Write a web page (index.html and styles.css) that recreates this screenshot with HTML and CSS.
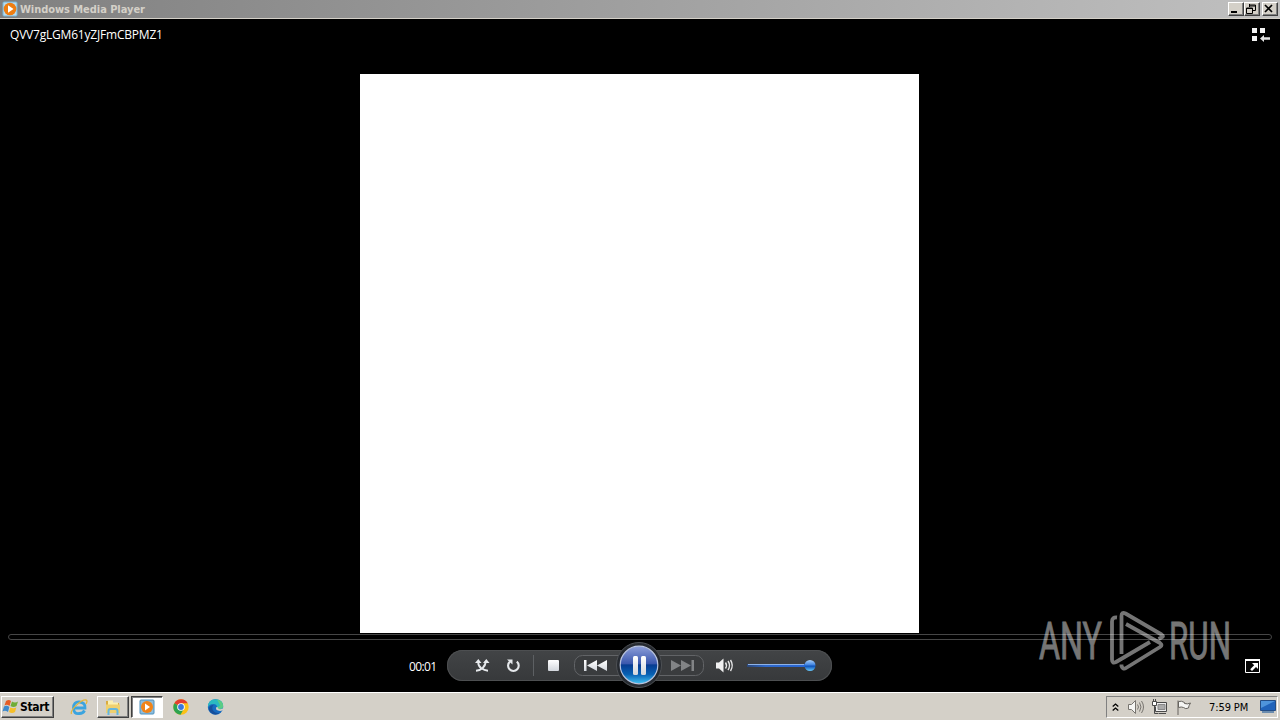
FILE: index.html
```
<!DOCTYPE html>
<html lang="en">
<head>
    <meta charset="UTF-8">
    <title>Windows Media Player</title>
    <link rel="stylesheet" href="styles.css">
</head>
<body>
    <!-- Title bar -->
    <header class="titlebar">
        <svg class="app-icon" width="16" height="16" viewBox="0 0 16 16">
            <rect x="1" y="1" width="14" height="14" rx="1" fill="#b9ddf0" stroke="#76b4d8"/>
            <circle cx="8" cy="8" r="6.3" fill="#ee7d12"/>
            <path d="M6 4.3l5.5 3.7L6 11.7z" fill="#fff"/>
        </svg>
        <span class="title">Windows Media Player</span>
        <div class="window-buttons">
            <button><svg width="12" height="10"><path d="M2 8h6" stroke="#000" stroke-width="2"/></svg></button>
            <button><svg width="12" height="10"><path d="M4.5 0v3M4 1h6.500v5.500H8M4.500 2h6M1.500 4v5.500h6V4zM1 4.500h7" fill="none" stroke="#000"/></svg></button>
            <button class="close"><svg width="12" height="10"><path d="M2 1l7 7M9 1L2 8" stroke="#000" stroke-width="1.700"/></svg></button>
        </div>
    </header>

    <main class="player">
        <div class="player-top">
            <span class="media-name">QVV7gLGM61yZJFmCBPMZ1</span>
            <svg class="library-icon" width="20" height="16" viewBox="0 0 20 16">
                <path d="M1 1h5v5H1zM9 1h5v5H9zM1 9h5v5H1z" fill="#f4f4f4"/>
                <path d="M9 11.500l4-3.500v2.300h6v2.500h-6V15z" fill="#e4e4e4"/>
            </svg>
        </div>

        <div class="video"></div>
        <div class="seek"></div>

        <div class="controls">
            <span class="time">00:01</span>
            <div class="pill">
                <svg width="385" height="48" viewBox="447 641 385 48">
                    <defs>
                        <linearGradient id="ball" x1="0" y1="0" x2="0" y2="1">
                            <stop offset="0" stop-color="#8e9fd9"/>
                            <stop offset=".46" stop-color="#3b58ae"/>
                            <stop offset=".5" stop-color="#073c91"/>
                            <stop offset=".75" stop-color="#0761b4"/>
                            <stop offset="1" stop-color="#45c4f4"/>
                        </linearGradient>
                        <linearGradient id="white" x1="0" y1="0" x2="0" y2="1">
                            <stop offset="0" stop-color="#fff"/>
                            <stop offset="1" stop-color="#d2d6dc"/>
                        </linearGradient>
                        <linearGradient id="track" x1="0" y1="0" x2="1" y2="0">
                            <stop offset="0" stop-color="#2c4776"/>
                            <stop offset=".3" stop-color="#2e68ca"/>
                            <stop offset="1" stop-color="#2866d4"/>
                        </linearGradient>
                        <linearGradient id="knob" x1="0" y1="0" x2="0" y2="1">
                            <stop offset="0" stop-color="#a9d0fa"/>
                            <stop offset=".45" stop-color="#3f83e0"/>
                            <stop offset=".55" stop-color="#0c50b8"/>
                            <stop offset="1" stop-color="#66c8fa"/>
                        </linearGradient>
                    </defs>
                    <!-- shuffle -->
                    <path d="M478.300 661v2q0 3 3 5.200t6.700 2.500M476 670.700q4-.2 6.700-2.700t3.300-7" fill="none" stroke="#e6e9ec" stroke-width="1.900"/>
                    <path d="M475 663l3.300-4 3.200 4zM483 663l3.300-4 3.200 4z" fill="#e6e9ec"/>
                    <!-- repeat -->
                    <path d="M510 661.600a5.300 5.300 0 1 0 6.800 0" fill="none" stroke="#e6e9ec" stroke-width="2.100"/>
                    <path d="M507 659.500h5.500v5z" fill="#e6e9ec"/>
                    <path d="M533.500 655v21" stroke="#5d6063"/>
                    <!-- stop -->
                    <rect x="548" y="660" width="11" height="11" rx="1" fill="url(#white)"/>
                    <!-- previous and next -->
                    <rect x="574.500" y="655.500" width="129" height="20" rx="8" fill="#3a3c3e" stroke="#626467"/>
                    <path d="M584 660h2.500v11H584zM587 665.500l10-5.500v11zM597 665.500l10-5.500v11z" fill="url(#white)"/>
                    <path d="M671 660l10 5.500-10 5.500zM681 660l10 5.500-10 5.500zM691.500 660h2.500v11h-2.500z" fill="#828486"/>
                    <!-- pause -->
                    <circle cx="639" cy="665" r="22.500" fill="#262a30" stroke="#4e5155"/>
                    <circle cx="639" cy="665" r="18.800" fill="url(#ball)" stroke="#b8c3de" stroke-width="1.200"/>
                    <rect x="633" y="656" width="5" height="19" rx="1.500" fill="url(#white)"/>
                    <rect x="641" y="656" width="5" height="19" rx="1.500" fill="url(#white)"/>
                    <!-- volume -->
                    <path d="M716 662.500h3l4.500-4v14l-4.500-4h-3z" fill="#f0f0f0"/>
                    <path d="M725.500 662.500q2 3 0 6M728 661q3 4.500 0 9M730.500 660q3.500 5.500 0 11" fill="none" stroke="#e6e6e6" stroke-width="1.400"/>
                    <rect x="747" y="664" width="62" height="3" fill="url(#track)"/>
                    <path d="M748 664.500h56" stroke="#8eb2e6"/>
                    <circle cx="810" cy="665.500" r="5.500" fill="url(#knob)"/>
                </svg>
            </div>
        </div>

        <svg class="fullscreen-icon" width="15" height="14" viewBox="0 0 15 14">
            <path d="M.5 1v12.500h14V1z" fill="#050505" stroke="#fff"/>
            <path d="M0 1h15" stroke="#fff" stroke-width="2"/>
            <path d="M7 4h6v6l-2-2-4 4-1.800-1.800 4-4z" fill="#fff"/>
        </svg>

        <!-- Watermark over the player -->
        <svg class="watermark" width="208" height="80" viewBox="1036 604 208 80">
            <g class="watermark-text">
                <text x="1039" y="659" textLength="63" lengthAdjust="spacingAndGlyphs">ANY</text>
                <text x="1169" y="659" textLength="62" lengthAdjust="spacingAndGlyphs">RUN</text>
            </g>
            <g fill="none" stroke="#fff" stroke-width="3.800" stroke-linejoin="round">
                <path d="M1121.500 654v-38q0-4.500 4-2.500l36 21q3 2 0 3l-3 1.500"/>
                <path d="M1117 617.500q-5-.5-5 4v38q0 4.500 4 2.500l34-20"/>
                <path d="M1126 624l34 19q3 2 0 4l-34 21q-3 2-4.500-2v-1.500"/>
            </g>
        </svg>
    </main>

    <!-- Taskbar -->
    <footer class="taskbar">
        <button class="start">
            <svg width="18" height="18" viewBox="0 0 18 18">
                <path d="M4 3q3-2 5 0L7.500 8Q5 6 2.500 7.500z" fill="#e55b24"/>
                <path d="M10 3.500q3 2 6 0L14.500 8q-3 2-6 0z" fill="#70ad35"/>
                <path d="M2 8.500q3-1.500 5.300.5L6 14q-3-2-5.500-.5z" fill="#3d89cc"/>
                <path d="M8.300 9.500q3 1.500 6 0L13 14q-3 2-6 0z" fill="#f6bf29"/>
            </svg>
            <span>Start</span>
        </button>
        <nav class="tasks">
            <div class="task">
                <svg width="18" height="18" viewBox="0 0 18 18">
                    <path d="M4 10h11q.5-5.500-5.500-6T3.500 10t6 5.500q3.500 0 5-3" fill="none" stroke="#3ba4df" stroke-width="2.800"/>
                    <path d="M1.500 16C-.5 12 12 1 16 2q2 .5 0 4" fill="none" stroke="#e3b63c" stroke-width="1.300"/>
                </svg>
            </div>
            <div class="task raised">
                <svg width="18" height="18" viewBox="0 0 18 18">
                    <path d="M2 3h5l1 2h7v10H2z" fill="#d9ab40"/>
                    <path d="M4 2.500h5v2h5V12H4z" fill="#fbefb0"/>
                    <path d="M2 6.500h14V15H2z" fill="#efd06e"/>
                    <path d="M4.500 17v-4q0-2 2-2h5q2 0 2 2v4" fill="none" stroke="#65b6dd" stroke-width="2"/>
                </svg>
            </div>
            <div class="task active">
                <svg width="16" height="16" viewBox="0 0 16 16">
                    <rect x="1" y="1" width="14" height="14" rx="1" fill="#8cbddd" stroke="#4f91bd"/>
                    <circle cx="8" cy="8" r="6" fill="#f08318"/>
                    <path d="M6 4.500l5 3.500-5 3.500z" fill="#fff"/>
                </svg>
            </div>
            <div class="task">
                <svg width="16" height="16" viewBox="0 0 16 16">
                    <circle cx="8" cy="8" r="7.700" fill="#fbc116"/>
                    <path d="M8 8L1.300 4.200A7.700 7.700 0 0 1 14.700 4.200H8z" fill="#e23d30"/>
                    <path d="M1.300 4.200A7.700 7.700 0 0 0 7.500 15.700L11 9.500 8 8z" fill="#2da350"/>
                    <circle cx="8" cy="8" r="3.800" fill="#fff"/>
                    <circle cx="8" cy="8" r="2.900" fill="#3977dc"/>
                </svg>
            </div>
            <div class="task">
                <svg width="17" height="16" viewBox="0 0 17 16">
                    <circle cx="8.500" cy="8" r="7.700" fill="#176bc0"/>
                    <path d="M1 8Q1 .3 8.500.3 16 .5 16.200 7q0 3-4 3-2.500 0-2-1.500Q10 5 6.500 5 2.500 5 1 8z" fill="#2bb9c1"/>
                    <path d="M10 .6q6 1.500 6.200 6.400 0 3-4 3-2.500 0-2-1.500l3-2z" fill="#5bcc85"/>
                    <path d="M9.500 8q-1.500 2.500 1.500 3.500 2.500 1 5-.5l1 1V9q-3 1.500-5 1-1.500-.5-1.500-2z" fill="#d4d0c8"/>
                    <path d="M6.500 6Q4 9 6.500 12t7 1.500Q9 17 5 14.500 1 12 2 9t4.500-3z" fill="#174f9b"/>
                </svg>
            </div>
        </nav>
        <div class="tray">
            <svg class="chevrons" width="7" height="9" viewBox="0 0 7 9"><path d="M.7 3.500l2.800-2.500 2.800 2.500M.7 7.500L3.500 5l2.800 2.500" fill="none" stroke="#000" stroke-width="1.300"/></svg>
            <svg width="17" height="16" viewBox="0 0 17 16" fill="none" stroke="#77746f">
                <path d="M1.500 5.500h3l4-4v13l-4-4h-3z" fill="#f5f5f3"/>
                <path d="M10.500 5.500q2 2.500 0 5M12.500 3.500q3 4.500 0 9M14.500 2q4 6 0 12"/>
            </svg>
            <svg class="network" width="17" height="16" viewBox="0 0 17 16" fill="none" stroke="#4a4a4a">
                <path d="M5.500 3.500h10v9h-11v-5" fill="#eee"/>
                <path d="M7 5.500h7v5H7z" fill="#aaa" stroke="#888"/>
                <path d="M8 14.500h7M3.500 7v7.500h4"/>
                <path d="M1.500 2.500h4v4h-4zM2.500 0v2M4.500 0v2" fill="#fff"/>
            </svg>
            <svg class="flag" width="16" height="16" viewBox="0 0 16 16" fill="#f5f5f3" stroke="#66635e">
                <path d="M2 1.500V16"/>
                <path d="M2.500 2.500q3-1 6 1v1q3 1 6-.5-2 3-2 5-3 1.500-5-.5-2-1-5 0z"/>
            </svg>
            <span class="clock">7:59 PM</span>
            <svg width="16" height="14" viewBox="0 0 16 14">
                <path d="M.5.5h15v10H.5z" fill="#2163ba" stroke="#244d85"/>
                <path d="M1 1h14L1 8z" fill="#4f94db"/>
                <path d="M2 12h12" stroke="#6b8cae" stroke-width="2"/>
            </svg>
        </div>
    </footer>
</body>
</html>
```
FILE: styles.css
```
* {
    box-sizing: border-box;
}
body {
    display: flex;
    flex-direction: column;
    width: 1280px;
    height: 720px;
    margin: 0;
    overflow: hidden;
    background: #000;
    font-family: "DejaVu Sans Condensed", "DejaVu Sans", sans-serif;
}
svg {
    display: block;
    flex: none;
}
button {
    padding: 0;
    font-family: inherit;
}
.titlebar {
    display: flex;
    align-items: center;
    height: 19px;
    padding: 0 2px;
    background: linear-gradient(to right, #808080, #c0c0c0);
    border-bottom: 1px solid #d4d0c8;
}
.title {
    margin-left: 2px;
    color: #d4d0c8;
    font-size: 11px;
    font-weight: bold;
    letter-spacing: -0.05px;
    white-space: nowrap;
}
.window-buttons {
    display: flex;
    margin-left: auto;
}
.window-buttons button {
    width: 16px;
    height: 14px;
    background: #d4d0c8;
    border: 1px solid;
    border-color: #fff #404040 #404040 #fff;
    box-shadow: inset -1px -1px #808080;
}
.window-buttons .close {
    margin-left: 2px;
}
.player {
    position: relative;
    display: flex;
    flex-direction: column;
    flex: 1;
    background: #000;
}
.player-top {
    display: flex;
    justify-content: space-between;
    height: 55px;
    padding: 7px 9px 0 10px;
    color: #fff;
}
.media-name {
    font: 12px/17px "Open Sans", sans-serif;
    letter-spacing: -0.2px;
}
.library-icon {
    margin-top: 1px;
}
.video {
    flex: none;
    width: 559px;
    height: 559px;
    margin-left: 360px;
    background: #fff;
}
.seek {
    flex: none;
    height: 6px;
    margin: 1px 8px 0;
    border: 1px solid #464646;
    border-radius: 3px;
}
.controls {
    display: flex;
    align-items: center;
    height: 48px;
    margin: 1px 0 0 409px;
}
.time {
    width: 38px;
    padding-top: 3px;
    color: #fff;
    font: 12px/16px "Open Sans", sans-serif;
    letter-spacing: -0.6px;
}
.pill {
    display: flex;
    align-items: center;
    height: 31px;
    background: linear-gradient(#424446, #37393b);
    border-radius: 16px;
    box-shadow: inset 0 0 0 1px #4d4f51;
}
.fullscreen-icon {
    position: absolute;
    right: 20px;
    bottom: 19px;
}
.watermark {
    position: absolute;
    left: 1036px;
    top: 585px;
    opacity: 0.46;
}
.watermark-text {
    fill: #fff;
    stroke: #fff;
    stroke-width: 0.8px;
    font-family: Roboto, sans-serif;
    font-size: 51px;
}
.taskbar {
    display: flex;
    align-items: center;
    height: 28px;
    padding: 1px 2px 0 1px;
    background: #d4d0c8;
    border-top: 1px solid #fff;
}
.start {
    display: flex;
    align-items: center;
    width: 53px;
    height: 22px;
    background: #d4d0c8;
    border: 1px solid;
    border-color: #fff #404040 #404040 #fff;
    box-shadow: inset -1px -1px #808080;
    font-size: 12px;
    font-weight: bold;
    letter-spacing: -0.3px;
}
.tasks {
    display: flex;
    margin-left: 9px;
}
.task {
    display: flex;
    align-items: center;
    justify-content: center;
    width: 32px;
    height: 22px;
    margin-right: 2px;
}
.raised {
    border: 1px solid;
    border-color: #fff #404040 #404040 #fff;
    box-shadow: inset -1px -1px #808080;
}
.active {
    background: #fff;
    border: 1px solid;
    border-color: #404040 #fff #fff #404040;
    box-shadow: inset 1px 1px #808080;
}
.tray {
    display: flex;
    align-items: center;
    width: 172px;
    height: 22px;
    margin-left: auto;
    padding-left: 5px;
    border: 1px solid;
    border-color: #808080 #fff #fff #808080;
}
.chevrons {
    margin-right: 8px;
}
.network {
    margin-left: 7px;
}
.flag {
    margin-left: 8px;
}
.clock {
    width: 51px;
    margin-left: 17px;
    font-size: 11px;
    letter-spacing: -0.1px;
    white-space: nowrap;
}
```
